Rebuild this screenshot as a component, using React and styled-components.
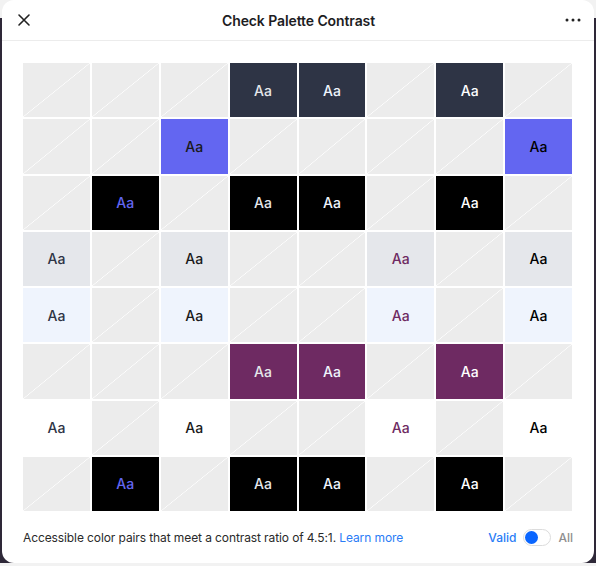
import styled, { createGlobalStyle } from "styled-components";

const GlobalStyle = createGlobalStyle`
  html, body {
    margin: 0;
    padding: 0;
  }
  body {
    background: linear-gradient(#f2f2f2 0 18px, #2e2838 18px);
    font-family: Inter, "Noto Sans", "Liberation Sans", sans-serif;
    -webkit-font-smoothing: antialiased;
  }
`;

const palette = ["#2e3445", "#6366f1", "#1a1a1a", "#e5e7eb", "#eff4fd", "#6e2a62", "#ffffff", "#000000"];
const backgrounds = ["#2e3445", "#6366f1", "#000000", "#e5e7eb", "#eff4fd", "#6e2a62", "#ffffff", "#000000"];

// rows = background, columns = text colour; 1 = pair passes 4.5:1
const matrix = [
    "00011010",
    "00100001",
    "01011010",
    "10100101",
    "10100101",
    "00011010",
    "10100101",
    "01011010",
];

const Window = styled.div`
  box-sizing: border-box;
  width: 592px;
  height: 563px;
  margin-left: 2px;
  background: #fff;
  border-radius: 12px;
  display: flex;
  flex-direction: column;
  overflow: hidden;
`;

const Header = styled.div`
  height: 40px;
  flex: none;
  display: flex;
  align-items: center;
  justify-content: space-between;
  padding: 0 12px 0 13px;
  border-bottom: 1px solid #ececec;
`;

const IconButton = styled.button`
  width: 18px;
  height: 18px;
  padding: 0;
  border: 0;
  background: none;
  display: flex;
  align-items: center;
  justify-content: center;
  color: #222;
`;

const Title = styled.h1`
  margin: 0;
  font-size: 14px;
  font-weight: 600;
  color: #1d1d1f;
  letter-spacing: -0.1px;
`;

const Body = styled.div`
  padding: 22px 22px 0 21px;
`;

const Grid = styled.div`
  height: 448px;
  display: grid;
  grid-template-columns: repeat(8, 1fr);
  grid-template-rows: repeat(8, 1fr);
  gap: 2px;
`;

const Cell = styled.div`
  display: flex;
  align-items: center;
  justify-content: center;
  font-size: 14px;
  font-weight: 500;
  background: ${(p) => (p.$filled ? p.$bg : "#ececec")};
  color: ${(p) => p.$fg};
  ${(p) =>
        !p.$filled &&
        `background-image: linear-gradient(to bottom right, transparent calc(50% - 0.6px), rgba(255,255,255,0.95) 50%, transparent calc(50% + 0.6px));`}
`;

const Footer = styled.div`
  flex: 1;
  display: flex;
  align-items: center;
  justify-content: space-between;
  padding: 0 21px 0 21px;
  font-size: 12px;
`;

const Note = styled.p`
  margin: 0;
  color: #2a2a2a;
  letter-spacing: -0.1px;
`;

const Link = styled.a`
  color: #2a7cf6;
  text-decoration: none;
`;

const Filter = styled.div`
  display: flex;
  align-items: center;
  gap: 7px;
`;

const FilterLabel = styled.span`
  color: ${(p) => (p.$active ? "#2a7cf6" : "#8e8e8e")};
  font-weight: 500;
`;

const Toggle = styled.div`
  box-sizing: border-box;
  width: 28px;
  height: 17px;
  border: 1px solid #dcdcdc;
  border-radius: 9px;
  padding: 1px;
  display: flex;
  align-items: center;
`;

const Knob = styled.span`
  width: 13px;
  height: 13px;
  border-radius: 50%;
  background: #0a66ff;
`;

const App = () => {
    return (
        <>
            <GlobalStyle />
            <Window>
                <Header>
                    <IconButton aria-label="Close">
                        <svg width="14" height="14" viewBox="0 0 14 14" fill="none" stroke="currentColor" strokeWidth="1.6" strokeLinecap="round">
                            <path d="M2 2l10 10M12 2L2 12" />
                        </svg>
                    </IconButton>
                    <Title>Check Palette Contrast</Title>
                    <IconButton aria-label="More">
                        <svg width="16" height="4" viewBox="0 0 16 4" fill="currentColor">
                            <circle cx="2" cy="2" r="1.5" />
                            <circle cx="8" cy="2" r="1.5" />
                            <circle cx="14" cy="2" r="1.5" />
                        </svg>
                    </IconButton>
                </Header>

                <Body>
                    <Grid>
                        {matrix.map((row, r) =>
                            row.split("").map((v, c) => (
                                <Cell key={`${r}-${c}`} $filled={v === "1"} $bg={backgrounds[r]} $fg={palette[c]}>
                                    {v === "1" ? "Aa" : null}
                                </Cell>
                            ))
                        )}
                    </Grid>
                </Body>

                <Footer>
                    <Note>
                        Accessible color pairs that meet a contrast ratio of 4.5:1. <Link href="#">Learn more</Link>
                    </Note>
                    <Filter>
                        <FilterLabel $active>Valid</FilterLabel>
                        <Toggle>
                            <Knob />
                        </Toggle>
                        <FilterLabel>All</FilterLabel>
                    </Filter>
                </Footer>
            </Window>
        </>
    );
};

export default App;
